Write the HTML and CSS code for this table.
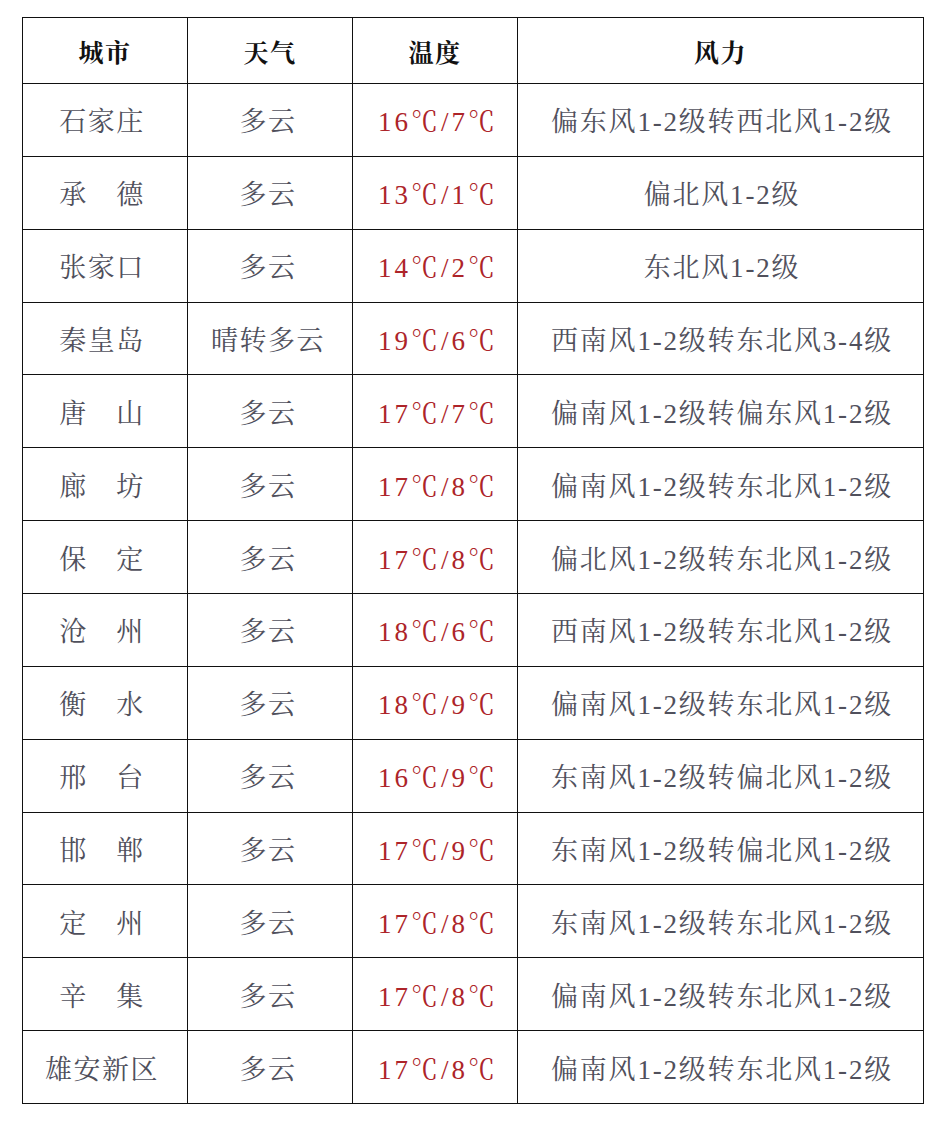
FILE: index.html
```html
<!DOCTYPE html>
<html lang="zh-CN">
<head>
<meta charset="utf-8">
<title>河北天气</title>
<link rel="stylesheet" href="styles.css">
</head>
<body>
<table class="weather">
  <colgroup>
    <col class="c-city"><col class="c-sky"><col class="c-temp"><col class="c-wind">
  </colgroup>
  <thead>
    <tr><th>城市</th><th>天气</th><th>温度</th><th>风力</th></tr>
  </thead>
  <tbody>
    <tr><td class="city">石家庄</td><td class="sky">多云</td><td class="temp">16℃/7℃</td><td class="wind">偏东风1-2级转西北风1-2级</td></tr>
    <tr><td class="city">承　德</td><td class="sky">多云</td><td class="temp">13℃/1℃</td><td class="wind">偏北风1-2级</td></tr>
    <tr><td class="city">张家口</td><td class="sky">多云</td><td class="temp">14℃/2℃</td><td class="wind">东北风1-2级</td></tr>
    <tr><td class="city">秦皇岛</td><td class="sky">晴转多云</td><td class="temp">19℃/6℃</td><td class="wind">西南风1-2级转东北风3-4级</td></tr>
    <tr><td class="city">唐　山</td><td class="sky">多云</td><td class="temp">17℃/7℃</td><td class="wind">偏南风1-2级转偏东风1-2级</td></tr>
    <tr><td class="city">廊　坊</td><td class="sky">多云</td><td class="temp">17℃/8℃</td><td class="wind">偏南风1-2级转东北风1-2级</td></tr>
    <tr><td class="city">保　定</td><td class="sky">多云</td><td class="temp">17℃/8℃</td><td class="wind">偏北风1-2级转东北风1-2级</td></tr>
    <tr><td class="city">沧　州</td><td class="sky">多云</td><td class="temp">18℃/6℃</td><td class="wind">西南风1-2级转东北风1-2级</td></tr>
    <tr><td class="city">衡　水</td><td class="sky">多云</td><td class="temp">18℃/9℃</td><td class="wind">偏南风1-2级转东北风1-2级</td></tr>
    <tr><td class="city">邢　台</td><td class="sky">多云</td><td class="temp">16℃/9℃</td><td class="wind">东南风1-2级转偏北风1-2级</td></tr>
    <tr><td class="city">邯　郸</td><td class="sky">多云</td><td class="temp">17℃/9℃</td><td class="wind">东南风1-2级转偏北风1-2级</td></tr>
    <tr><td class="city">定　州</td><td class="sky">多云</td><td class="temp">17℃/8℃</td><td class="wind">东南风1-2级转东北风1-2级</td></tr>
    <tr><td class="city">辛　集</td><td class="sky">多云</td><td class="temp">17℃/8℃</td><td class="wind">偏南风1-2级转东北风1-2级</td></tr>
    <tr><td class="city">雄安新区</td><td class="sky">多云</td><td class="temp">17℃/8℃</td><td class="wind">偏南风1-2级转东北风1-2级</td></tr>
  </tbody>
</table>
</body>
</html>
```
FILE: styles.css
```css
html, body {
  margin: 0;
  padding: 0;
  background: #ffffff;
}
body {
  padding: 17px 0 0 22px;
  font-family: "Liberation Serif", "Noto Serif CJK SC", "Noto Sans CJK SC", serif;
}
.weather {
  border-collapse: collapse;
  table-layout: fixed;
  width: 901px;
}
.c-city { width: 165px; }
.c-sky { width: 165px; }
.c-temp { width: 165px; }
.c-wind { width: 406px; }
.weather th,
.weather td {
  border: 1px solid #111111;
  padding: 0;
  text-align: center;
  vertical-align: middle;
  letter-spacing: 1.5px;
  white-space: nowrap;
}
.weather th {
  height: 65px;
  font-size: 25px;
  font-weight: bold;
  color: #111111;
}
.weather td {
  height: 71.86px;
  font-size: 27px;
  color: #50505c;
}
.weather td.city {
  padding-right: 6px;
}
.weather td.sky {
  padding-right: 4px;
}
.weather td.temp {
  color: #ad2429;
  letter-spacing: 3px;
  padding-left: 6px;
}
.weather td.wind {
  letter-spacing: 1.8px;
  padding-left: 3px;
}
```
